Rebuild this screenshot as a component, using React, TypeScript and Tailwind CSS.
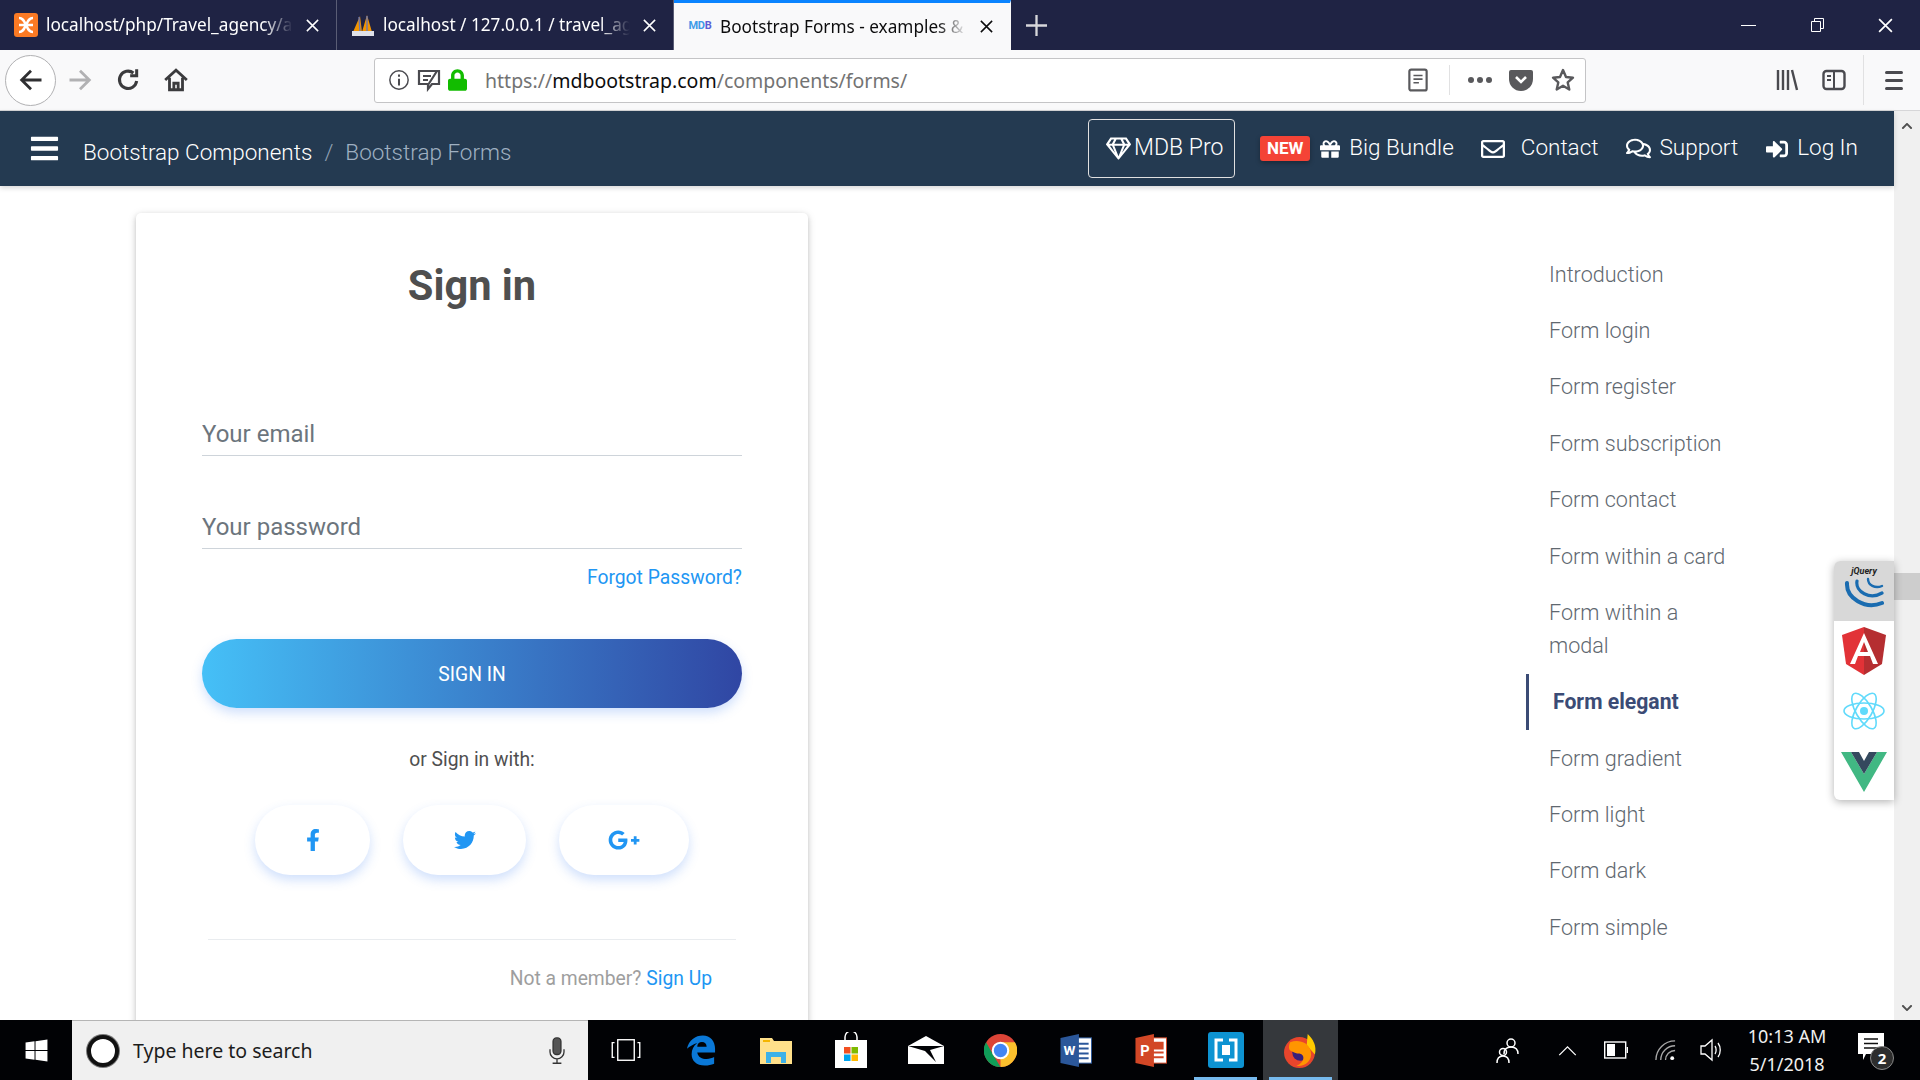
import React from 'react';
import {
  FaBars, FaRegGem, FaGift, FaRegEnvelope, FaRegComments, FaSignInAlt,
  FaFacebookF, FaTwitter, FaGooglePlusG, FaWindows, FaLock, FaChevronUp, FaChevronDown,
} from 'react-icons/fa';

const sideLinks = [
  'Introduction', 'Form login', 'Form register', 'Form subscription', 'Form contact', 'Form within a card', 'Form within a modal',
];
const sideLinksAfter = ['Form gradient', 'Form light', 'Form dark', 'Form simple'];

const CloseX = ({ className = '' }: { className?: string }) => (
  <svg viewBox="0 0 16 16" className={className} fill="none" stroke="currentColor" strokeWidth="1.6">
    <path d="M2 2l12 12M14 2L2 14" />
  </svg>
);

const Tab = ({ icon, title, active }: { icon: React.ReactNode; title: string; active?: boolean }) => (
  <div className={`w-[337px] h-full flex items-center pl-[14px] pr-[16px] border-r ${active ? 'bg-[#f9f9fa] text-[#0c0c0d] border-transparent border-t-[3px] border-t-[#0a84ff]' : 'text-white border-[#5a5d75]'}`}>
    <div className="w-[24px] h-[24px] mr-[8px] shrink-0 flex items-center justify-center">{icon}</div>
    <div className="flex-1 min-w-0 overflow-hidden whitespace-nowrap text-[17.2px] [mask-image:linear-gradient(to_right,black_88%,transparent)]">{title}</div>
    <CloseX className="w-[15px] h-[15px] ml-[12px] shrink-0" />
  </div>
);

const NavLink = ({ icon, label, gap }: { icon: React.ReactNode; label: string; gap: string }) => (
  <div className={`flex items-center ${gap}`}>
    {icon}
    <span className="-mt-[2px] text-[22.5px] font-light">{label}</span>
  </div>
);

const TaskIcon = ({ children, active, running }: { children: React.ReactNode; active?: boolean; running?: boolean }) => (
  <div className={`relative w-[75px] h-full flex items-center justify-center ${active ? 'bg-[#35383c]' : ''}`}>
    {children}
    {(active || running) && <div className="absolute bottom-0 left-[6px] right-[6px] h-[3px] bg-[#76b9ed]" />}
  </div>
);

const App: React.FC = () => {
  return (
    <div className="w-[1920px] h-[1080px] flex flex-col overflow-hidden bg-white font-['Roboto',sans-serif]">
      {/* Browser tabs */}
      <div className="h-[50px] shrink-0 bg-[#1f2344] flex items-stretch font-['Noto_Sans',sans-serif]">
        <Tab
          title="localhost/php/Travel_agency/admin"
          icon={
            <svg viewBox="0 0 24 24" className="w-[24px] h-[24px]">
              <rect width="24" height="24" rx="3" fill="#fb7a24" />
              <path d="M5 5c4 0 5 3 7 7s3 7 7 7M19 5c-4 0-5 3-7 7s-3 7-7 7M5 12h14" stroke="#fff" strokeWidth="2.6" fill="none" />
            </svg>
          }
        />
        <Tab
          title="localhost / 127.0.0.1 / travel_agency"
          icon={
            <svg viewBox="0 0 24 24" className="w-[24px] h-[24px]">
              <path d="M2 19L9 3l2 16zM11 19l5-17 5 17z" fill="#f29400" />
              <path d="M8 4l1 15M16 3v16" stroke="#6c78af" strokeWidth="1.4" />
              <rect x="1" y="18" width="22" height="5" fill="#dfe1ea" />
            </svg>
          }
        />
        <Tab
          active
          title="Bootstrap Forms - examples & tutorial"
          icon={
            <span className="text-[11px] font-bold tracking-tight text-[#3f9be8] font-['Roboto',sans-serif]">MD<span className="text-[#5b5fd6]">B</span></span>
          }
        />
        <div className="w-[50px] flex items-center justify-center text-[#d7d7db]">
          <svg viewBox="0 0 20 20" className="w-[21px] h-[21px]" fill="none" stroke="currentColor" strokeWidth="2.2"><path d="M10 0v20M0 10h20" /></svg>
        </div>
        <div className="flex-1" />
        <div className="flex items-center text-white">
          <div className="w-[69px] flex justify-center"><div className="w-[15px] h-px bg-white" /></div>
          <div className="w-[69px] flex justify-center">
            <svg viewBox="0 0 14 14" className="w-[14px] h-[14px]" fill="none" stroke="currentColor"><path d="M.5 3.5h9v10h-9zM3.5 3.5v-3h9v10h-3" /></svg>
          </div>
          <div className="w-[68px] pr-[2px] flex justify-center"><CloseX className="w-[17px] h-[17px]" /></div>
        </div>
      </div>

      {/* Browser toolbar */}
      <div className="h-[61px] shrink-0 bg-[#f9f9fa] border-b border-[#d6d6d8] flex items-center font-['Noto_Sans',sans-serif] text-[#3b3b3d]">
        <div className="ml-[5px] w-[51px] h-[51px] rounded-full border border-[#b1b1b3] bg-white flex items-center justify-center">
          <svg viewBox="0 0 24 24" className="w-[28px] h-[28px]" fill="none" stroke="#2f2f31" strokeWidth="2.4"><path d="M21 12H4M12 4l-8 8 8 8" /></svg>
        </div>
        <svg viewBox="0 0 24 24" className="ml-[10px] w-[28px] h-[28px]" fill="none" stroke="#b1b1b3" strokeWidth="2.4"><path d="M3 12h17M12 4l8 8-8 8" /></svg>
        <svg viewBox="0 0 24 24" className="ml-[21px] w-[26px] h-[26px]" fill="none" stroke="#3b3b3d" strokeWidth="2.8"><path d="M20 13a8 8 0 1 1-3-7.5M20 2v6h-6" /></svg>
        <svg viewBox="0 0 24 24" className="ml-[22px] w-[26px] h-[26px]" fill="none" stroke="#3b3b3d" strokeWidth="2.6"><path d="M2 12L12 3l10 9M6 10v11h12V10M10 21v-6h4v6" /></svg>

        <div className="ml-[185px] w-[1212px] h-[45px] bg-white border border-[#c4c4c6] rounded-[3px] flex items-center">
          <svg viewBox="0 0 24 24" className="ml-[13px] w-[22px] h-[22px]" fill="none" stroke="#4a4a4f" strokeWidth="1.6">
            <circle cx="12" cy="12" r="10" /><path d="M12 10.5V18M12 6v2.5" strokeWidth="2.2" />
          </svg>
          <svg viewBox="0 0 24 24" className="ml-[7px] w-[24px] h-[24px]" fill="none" stroke="#4a4a4f" strokeWidth="2.2">
            <path d="M2 3h20v13h-7l-4 5v-5H2zM6 8h8M6 12h5M20 3L11 17" />
          </svg>
          <FaLock className="ml-[7px] w-[19px] h-[22px] text-[#12bc00]" />
          <div className="ml-[18px] mt-[2px] text-[19.5px] text-[#737373] whitespace-nowrap">https://<span className="text-[#0c0c0d]">mdbootstrap.com</span>/components/forms/</div>
          <div className="flex-1" />
          <svg viewBox="0 0 22 26" className="w-[20px] h-[24px]" fill="none" stroke="#59595c" strokeWidth="2.4">
            <rect x="1.5" y="1.5" width="19" height="23" rx="2" /><path d="M6 8h10M6 12h10M6 16h6" strokeWidth="1.8" />
          </svg>
          <div className="ml-[21px] w-px h-[30px] bg-[#e1e1e2]" />
          <div className="ml-[18px] flex gap-[3px]">
            <div className="w-[6px] h-[6px] rounded-full bg-[#59595c]" />
            <div className="w-[6px] h-[6px] rounded-full bg-[#59595c]" />
            <div className="w-[6px] h-[6px] rounded-full bg-[#59595c]" />
          </div>
          <svg viewBox="0 0 24 22" className="ml-[17px] w-[24px] h-[22px]">
            <path d="M2 1h20a2 2 0 0 1 2 2v7a12 12 0 0 1-24 0V3a2 2 0 0 1 2-2z" fill="#59595c" />
            <path d="M7 8l5 5 5-5" stroke="#fff" strokeWidth="2.6" fill="none" />
          </svg>
          <svg viewBox="0 0 24 24" className="ml-[18px] mr-[10px] w-[24px] h-[24px]" fill="none" stroke="#59595c" strokeWidth="2.4" strokeLinejoin="round">
            <path d="M12 2l3 7 7 .7-5.3 4.7 1.6 7.1L12 17.8 5.7 21.5l1.6-7.1L2 9.7 9 9z" />
          </svg>
        </div>

        <svg viewBox="0 0 24 24" className="ml-[189px] w-[24px] h-[24px]" fill="none" stroke="#4a4a4f" strokeWidth="2.4">
          <path d="M3 2v20M8 2v20M13 2v20M17 2l5 20" />
        </svg>
        <svg viewBox="0 0 24 24" className="ml-[23px] w-[24px] h-[24px]" fill="none" stroke="#4a4a4f" strokeWidth="2.4">
          <rect x="1.5" y="3" width="21" height="18" rx="3" /><path d="M12 3v18M5 8h4M5 12h4" strokeWidth="2" />
        </svg>
        <div className="ml-[17px] w-px h-[50px] bg-[#e1e1e2]" />
        <div className="ml-[21px] flex flex-col gap-[5px]">
          <div className="w-[18px] h-[3px] rounded-full bg-[#4a4a4f]" />
          <div className="w-[18px] h-[3px] rounded-full bg-[#4a4a4f]" />
          <div className="w-[18px] h-[3px] rounded-full bg-[#4a4a4f]" />
        </div>
      </div>

      {/* Page */}
      <div className="flex-1 min-h-0 flex">
        <div className="flex-1 min-w-0 flex flex-col relative">
          {/* Page navbar */}
          <div className="h-[75px] shrink-0 bg-[#243a51] text-white flex items-center pl-[29px] pr-[36px] shadow-[0_2px_5px_rgba(0,0,0,0.16)] z-10">
            <FaBars className="w-[31px] h-[31px]" />
            <div className="ml-[23px] mt-[8px] flex items-center text-[22.5px] font-light">
              <span>Bootstrap Components</span>
              <span className="mx-[12px] text-[#8fa0b3]">/</span>
              <span className="text-[#9fb0c1]">Bootstrap Forms</span>
            </div>
            <div className="flex-1" />
            <div className="w-[147px] h-[59px] pl-[6px] border border-[#e0e0e0] rounded-[4px] flex items-center justify-center gap-[3px]">
              <FaRegGem className="w-[25px] h-[25px]" />
              <span className="text-[23px] font-light">MDB Pro</span>
            </div>
            <div className="ml-[25px] flex items-center">
              <span className="w-[50px] h-[25px] bg-[#f44336] rounded-[3px] flex items-center justify-center text-[17px] font-bold shadow-[0_2px_5px_rgba(0,0,0,0.3)]">NEW</span>
              <div className="ml-[10px]"><NavLink gap="gap-[9px]" label="Big Bundle" icon={<FaGift className="w-[20px] h-[20px]" />} /></div>
              <div className="ml-[27px]"><NavLink gap="gap-[16px]" label="Contact" icon={<FaRegEnvelope className="w-[24px] h-[24px]" />} /></div>
              <div className="ml-[27px]"><NavLink gap="gap-[9px]" label="Support" icon={<FaRegComments className="w-[25px] h-[25px]" />} /></div>
              <div className="ml-[28px]"><NavLink gap="gap-[9px]" label="Log In" icon={<FaSignInAlt className="w-[22px] h-[22px]" />} /></div>
            </div>
          </div>

          {/* Page body */}
          <div className="flex-1 min-h-0 overflow-hidden flex items-start">
            {/* Sign in card */}
            <div className="ml-[136px] mt-[27px] w-[672px] h-[900px] shrink-0 bg-white rounded-[5px] shadow-[0_2px_5px_0_rgba(0,0,0,0.16),0_2px_10px_0_rgba(0,0,0,0.12)] px-[66px]">
              <h1 className="mt-[48px] text-center text-[41.6px] leading-[50px] font-bold text-[#4f4f4f]">Sign in</h1>
              <input readOnly placeholder="Your email" className="mt-[101px] block w-full h-[44px] text-[24px] border-b border-[#ced4da] placeholder:text-[#6c757d] outline-none" />
              <input readOnly placeholder="Your password" className="mt-[49px] block w-full h-[44px] text-[24px] border-b border-[#ced4da] placeholder:text-[#6c757d] outline-none" />
              <div className="mt-[17px] text-right text-[19.3px] leading-[24px] text-[#2196f3]">Forgot Password?</div>
              <button className="mt-[49px] w-full h-[69px] pt-[3px] rounded-full bg-gradient-to-r from-[#45c0f7] to-[#3046a3] text-white text-[19.3px] shadow-[0_5px_11px_0_rgba(66,133,244,0.25)]">SIGN IN</button>
              <div className="mt-[40px] text-center text-[19.3px] leading-[24px] text-[#4f4f4f]">or Sign in with:</div>
              <div className="mt-[33px] flex justify-center gap-[33px] text-[#2196f3]">
                <div className="w-[115px] h-[70px] rounded-full bg-white flex items-center justify-center shadow-[0_5px_11px_0_rgba(66,133,244,0.25)]"><FaFacebookF className="w-[22px] h-[22px]" /></div>
                <div className="w-[123px] h-[70px] rounded-full bg-white flex items-center justify-center shadow-[0_5px_11px_0_rgba(66,133,244,0.25)]"><FaTwitter className="w-[22px] h-[22px]" /></div>
                <div className="w-[130px] h-[70px] rounded-full bg-white flex items-center justify-center shadow-[0_5px_11px_0_rgba(66,133,244,0.25)]"><FaGooglePlusG className="w-[32px] h-[32px]" /></div>
              </div>
              <div className="mt-[64px] mx-[6px] border-t border-[#e9ecef]" />
              <div className="mt-[27px] pr-[30px] text-right text-[19.3px] leading-[24px] text-[#9e9e9e]">Not a member? <span className="text-[#2196f3]">Sign Up</span></div>
            </div>

            {/* Section links */}
            <div className="ml-[718px] mt-[60px] w-[210px] text-[21.6px] leading-[33px] font-light text-[#5f6870]">
              {sideLinks.map(link => (
                <div key={link} className="pl-[23px] py-[11.7px]">{link}</div>
              ))}
              <div className="pl-[24px] py-[11.7px] border-l-[3px] border-[#3b4b75] font-bold text-[#3b4b75] text-[21.2px]">Form elegant</div>
              {sideLinksAfter.map(link => (
                <div key={link} className="pl-[23px] py-[11.7px]">{link}</div>
              ))}
            </div>
          </div>

          {/* Framework switcher */}
          <div className="absolute right-0 top-[450px] w-[60px] h-[239px] bg-white rounded-l-[6px] shadow-[0_2px_8px_rgba(0,0,0,0.3)] overflow-hidden z-20 flex flex-col items-center">
            <div className="w-full h-[60px] bg-[#d8d8d8] flex flex-col items-center pt-[5px]">
              <span className="text-[9px] leading-[10px] italic font-bold text-[#222]">jQuery</span>
              <svg viewBox="0 0 40 32" className="w-[40px] h-[36px]" fill="none" stroke="#1a6cb0" strokeLinecap="round">
                <path d="M3 5c-1 15 18 27 35 20" strokeWidth="4" />
                <path d="M13 3c-2 11 13 19 25 12" strokeWidth="3.2" />
                <path d="M24 1c0 6 7 10 14 7" strokeWidth="2.4" />
              </svg>
            </div>
            <svg viewBox="0 0 44 48" className="mt-[6px] w-[44px] h-[48px] shrink-0">
              <path d="M22 0L0 8l4 29 18 11z" fill="#e23237" />
              <path d="M22 0l22 8-4 29-18 11z" fill="#b52e31" />
              <path d="M22 6L8 37h5l3-8h12l3 8h5zM18 25l4-10 4 10z" fill="#fff" />
            </svg>
            <svg viewBox="-22 -20 44 40" className="mt-[16px] w-[44px] h-[40px] shrink-0" fill="none" stroke="#61dafb" strokeWidth="1.6">
              <circle r="4" fill="#61dafb" stroke="none" />
              <ellipse rx="20" ry="8" />
              <ellipse rx="20" ry="8" transform="rotate(60)" />
              <ellipse rx="20" ry="8" transform="rotate(120)" />
            </svg>
            <svg viewBox="0 0 46 40" className="mt-[20px] w-[46px] h-[42px] shrink-0">
              <path d="M0 0h10l13 22L36 0h10L23 40z" fill="#41b883" />
              <path d="M10 0h8l5 9 5-9h8L23 22z" fill="#34495e" />
            </svg>
          </div>
        </div>

        {/* Scrollbar */}
        <div className="w-[26px] shrink-0 bg-[#f0f0f0] flex flex-col items-center text-[#505050]">
          <FaChevronUp className="mt-[9px] w-[12px] h-[12px]" />
          <div className="mt-[441px] w-full h-[27px] bg-[#cdcdcd]" />
          <div className="flex-1" />
          <FaChevronDown className="mb-[6px] w-[12px] h-[12px]" />
        </div>
      </div>

      {/* Windows taskbar */}
      <div className="h-[60px] shrink-0 bg-[#010205] flex items-stretch text-white font-['Noto_Sans',sans-serif]">
        <div className="w-[72px] flex items-center justify-center"><FaWindows className="w-[25px] h-[25px]" /></div>
        <div className="w-[516px] bg-[#f0f0f0] border-t border-[#b5b5b5] flex items-center text-[#1c1c1c]">
          <div className="ml-[15px] w-[32px] h-[32px] rounded-full border-[4px] border-[#111] bg-white shadow-[0_0_0_1px_#777]" />
          <span className="ml-[14px] text-[19.5px]">Type here to search</span>
          <div className="flex-1" />
          <svg viewBox="0 0 20 32" className="mr-[22px] w-[18px] h-[28px]" fill="none" stroke="#333" strokeWidth="1.5">
            <rect x="5.5" y="1" width="9" height="19" rx="4" fill="#555" />
            <path d="M2 14v3a8 8 0 0 0 16 0v-3M10 25v5M5 30h10" />
          </svg>
        </div>
        <TaskIcon>
          <svg viewBox="0 0 32 24" className="w-[30px] h-[22px]" fill="none" stroke="#fff" strokeWidth="1.5">
            <rect x="7" y=".8" width="18" height="22.4" /><path d="M3.5 4H1v16h2.5M28.5 4H31v16h-2.5" />
          </svg>
        </TaskIcon>
        <TaskIcon>
          <svg viewBox="0 0 32 32" className="w-[30px] h-[33px]">
            <path fillRule="evenodd" fill="#0a78d7" d="M1 14C3 5 10 0 18 0c8 0 13 6 13 14v4H12c1 5 5 7 10 7 3 0 6-1 8-2v7c-3 1-6 2-10 2-9 0-14-5-14-12 0-5 2-9 6-12-4 1-8 4-11 6zM12 12h10c0-3-2-5-5-5s-5 2-5 5z" />
          </svg>
        </TaskIcon>
        <TaskIcon>
          <svg viewBox="0 0 32 28" className="w-[32px] h-[28px]">
            <path d="M0 2h12l2 3h18v23H0z" fill="#ffe08a" />
            <path d="M3 4h7v2H3z" fill="#f5b500" />
            <path d="M6 27V16h20v11h-5v-6H11v6z" fill="#3db1e8" />
          </svg>
        </TaskIcon>
        <TaskIcon>
          <svg viewBox="0 0 32 36" className="w-[32px] h-[36px]">
            <path d="M10 9V5a6 6 0 0 1 12 0v4" fill="none" stroke="#fff" strokeWidth="1.5" />
            <rect y="8" width="32" height="28" fill="#fff" />
            <rect x="9" y="15" width="6.5" height="6.5" fill="#f25022" /><rect x="16.5" y="15" width="6.5" height="6.5" fill="#7fba00" />
            <rect x="9" y="22.5" width="6.5" height="6.5" fill="#00a4ef" /><rect x="16.5" y="22.5" width="6.5" height="6.5" fill="#ffb900" />
          </svg>
        </TaskIcon>
        <TaskIcon>
          <svg viewBox="0 0 36 28" className="w-[36px] h-[28px]">
            <path d="M0 10L18 0l18 10v18H0z" fill="#fff" />
            <path d="M0 10h36L22 14l6 12-11-11z" fill="#010205" />
          </svg>
        </TaskIcon>
        <TaskIcon>
          <svg viewBox="0 0 32 32" className="w-[33px] h-[33px]">
            <circle cx="16" cy="16" r="16" fill="#db4437" />
            <path d="M16 32a16 16 0 0 0 14-24H16z" fill="#fbc02d" />
            <path d="M2 8l8 14 6 10a16 16 0 0 1-14-24z" fill="#0f9d58" />
            <circle cx="16" cy="16" r="7.5" fill="#4285f4" stroke="#fff" strokeWidth="2" />
          </svg>
        </TaskIcon>
        <TaskIcon>
          <svg viewBox="0 0 32 34" className="w-[32px] h-[33px]">
            <rect x="10" y="4" width="22" height="26" fill="#fff" stroke="#2b579a" />
            <path d="M18 10h11M18 15h11M18 20h11M18 25h11" stroke="#2b579a" strokeWidth="2" />
            <path d="M0 4l19-4v34L0 30z" fill="#2b579a" />
            <text x="3" y="22" fontSize="14" fontWeight="700" fill="#fff" fontFamily="Roboto, sans-serif">W</text>
          </svg>
        </TaskIcon>
        <TaskIcon>
          <svg viewBox="0 0 32 34" className="w-[32px] h-[33px]">
            <rect x="12" y="4" width="20" height="26" fill="#fff" stroke="#d24726" />
            <path d="M18 9h10v6H18zM18 19h11M18 24h11" stroke="#d24726" strokeWidth="2" fill="#d24726" />
            <path d="M0 4l19-4v34L0 30z" fill="#d24726" />
            <text x="5" y="23" fontSize="15" fontWeight="700" fill="#fff" fontFamily="Roboto, sans-serif">P</text>
          </svg>
        </TaskIcon>
        <TaskIcon running>
          <div className="w-[36px] h-[36px] rounded-[3px] bg-[#0d93d2] flex items-center justify-center">
            <svg viewBox="0 0 24 24" className="w-[24px] h-[24px]" fill="none" stroke="#fff" strokeWidth="3"><path d="M9 2H2v20h7M15 2h7v20h-7" /><rect x="8" y="7" width="8" height="10" fill="#fff" stroke="none" /></svg>
          </div>
        </TaskIcon>
        <TaskIcon active>
          <svg viewBox="0 0 32 34" className="w-[33px] h-[35px]">
            <circle cx="15" cy="19" r="15" fill="#e8452c" />
            <path d="M23 1c5 5 9 11 7 20L22 12z" fill="#ffcb00" />
            <circle cx="16" cy="19" r="8" fill="#3a1f7a" />
            <path d="M6 9c8-3 18 0 20 9s-6 15-14 14c8-3 9-11 3-12-3 0-6-1-9-3-2-2-1-6 0-8z" fill="#ff9500" />
          </svg>
        </TaskIcon>
        <div className="flex-1" />
        <div className="flex items-center">
          <svg viewBox="0 0 24 28" className="w-[24px] h-[28px] mr-[38px]" fill="none" stroke="#fff" strokeWidth="1.5">
            <circle cx="15" cy="7" r="4" /><path d="M8 18c0-5 3-7 7-7s7 2 7 7" /><circle cx="7" cy="16" r="3.5" /><path d="M1 27c0-5 2-7 6-7s6 2 6 7" />
          </svg>
          <svg viewBox="0 0 20 12" className="w-[19px] h-[11px] mr-[27px]" fill="none" stroke="#fff" strokeWidth="1.4"><path d="M1 11l9-9 9 9" /></svg>
          <svg viewBox="0 0 24 18" className="w-[24px] h-[18px] mr-[26px]" fill="none" stroke="#fff" strokeWidth="1.4">
            <rect x=".7" y="1" width="21" height="16" /><rect x="3" y="3" width="8" height="12" fill="#fff" stroke="none" /><path d="M23.3 6v6" />
          </svg>
          <svg viewBox="0 0 24 24" className="w-[23px] h-[23px] mr-[22px]" fill="none" stroke="#a8a8a8" strokeWidth="1.4">
            <path d="M2 22A20 20 0 0 1 22 2M7 22A15 15 0 0 1 22 7M12 22a10 10 0 0 1 10-10" /><circle cx="19" cy="20" r="2" fill="#fff" stroke="none" />
          </svg>
          <svg viewBox="0 0 24 24" className="w-[24px] h-[24px] mr-[12px]" fill="none" stroke="#fff" strokeWidth="1.3">
            <path d="M2 8h4l7-6v20l-7-6H2zM16 8c1.5 2 1.5 6 0 8M19 5c3 4 3 10 0 14" />
          </svg>
          <div className="w-[104px] text-center text-[18px] leading-[28px] text-[#f0f0f0]">
            <div>10:13 AM</div>
            <div>5/1/2018</div>
          </div>
          <div className="relative mr-[17px] w-[64px] h-full flex items-center justify-center">
            <svg viewBox="0 0 26 28" className="w-[26px] h-[28px] -mt-[6px]">
              <path d="M0 0h26v21H8l-3 6v-6H0z" fill="#fff" />
              <path d="M6 6h14M6 10.5h14M6 15h14" stroke="#111" strokeWidth="1.4" />
            </svg>
            <span className="absolute left-[31px] top-[26px] w-[24px] h-[24px] rounded-full bg-[#2d2d2d] border border-[#888] flex items-center justify-center text-[15px] font-bold">2</span>
          </div>
        </div>
      </div>
    </div>
  );
};

export default App;
